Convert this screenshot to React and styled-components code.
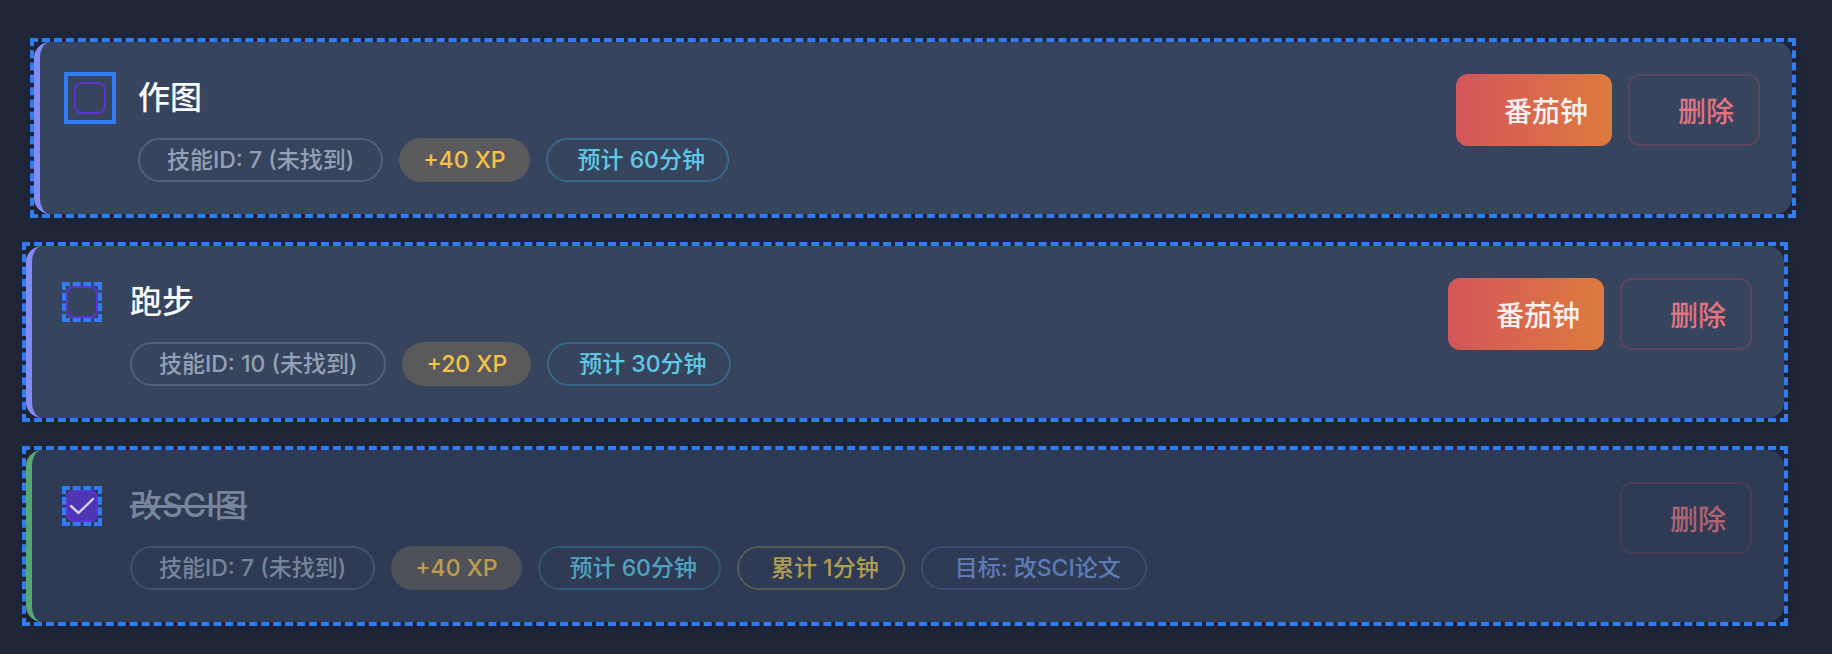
import React from 'react'
import styled, { createGlobalStyle } from 'styled-components'

const GlobalStyle = createGlobalStyle`
  body {
    margin: 0;
    background: #1f2638;
    font-family: Inter, "Noto Sans CJK SC", sans-serif;
  }
`

const List = styled.div`
  display: flex;
  flex-direction: column;
  gap: 32px;
  padding: 42px 48px 32px 26px;
`

// square dashed frame around each card (the card itself is rounded)
const Frame = styled.div`
  outline: 4px dashed #307cf4;
  outline-offset: 0;
  transform: ${p => (p.$hover ? 'translateX(8px)' : 'none')};
`

const Card = styled.div`
  display: flex;
  justify-content: space-between;
  align-items: flex-start;
  box-sizing: border-box;
  height: 172px;
  padding: 32px 32px 32px 34px;
  background: ${p => (p.$done ? '#2f3b54' : '#37445e')};
  border-left: 6px solid ${p => (p.$done ? '#56a677' : '#818cf8')};
  border-radius: 16px;
  box-shadow: 0 4px 12px rgba(0, 0, 0, 0.18);
`

const Main = styled.div`
  display: flex;
  flex-direction: column;
  gap: 16px;
`

const TitleRow = styled.div`
  display: flex;
  align-items: center;
  gap: 32px;
  height: 48px;
`

const CheckFrame = styled.span`
  display: flex;
  outline: ${p => (p.$focus ? '4px solid #307cf4' : '4px dashed #307cf4')};
  outline-offset: ${p => (p.$focus ? '6px' : '0')};
`

const Check = styled.span`
  display: flex;
  align-items: center;
  justify-content: center;
  box-sizing: border-box;
  width: 32px;
  height: 32px;
  border: 2px solid #5a33d2;
  border-radius: 8px;
  background: ${p => (p.$checked ? '#4f35b4' : 'transparent')};
`

const Title = styled.span`
  font-size: 32px;
  font-weight: 500;
  line-height: 48px;
  color: ${p => (p.$done ? '#94a3b8' : '#f8fafc')};
  text-decoration: ${p => (p.$done ? 'line-through' : 'none')};
  opacity: ${p => (p.$done ? 0.72 : 1)};
`

const Tags = styled.div`
  display: flex;
  gap: 16px;
  padding-left: 64px;
  opacity: ${p => (p.$done ? 0.72 : 1)};
`

const tagTones = {
  skill: { border: 'rgba(148, 163, 184, 0.3)', color: '#94a0b4', bg: 'transparent', pad: '0 27px' },
  xp: { border: 'transparent', color: '#f4c24a', bg: '#5a5a5c', pad: '0 22px' },
  time: { border: 'rgba(56, 189, 248, 0.3)', color: '#5fc9e5', bg: 'transparent', pad: '0 22px 0 30px' },
  total: { border: 'rgba(234, 200, 90, 0.3)', color: '#e2c355', bg: 'transparent', pad: '0 24px 0 32px' },
  goal: { border: 'rgba(96, 140, 230, 0.3)', color: '#6f96de', bg: 'transparent', pad: '0 24px 0 32px' },
}

const Tag = styled.span`
  box-sizing: border-box;
  height: 44px;
  padding: ${p => tagTones[p.$tone].pad};
  border: 2px solid ${p => tagTones[p.$tone].border};
  border-radius: 999px;
  background: ${p => tagTones[p.$tone].bg};
  color: ${p => tagTones[p.$tone].color};
  font-size: 23px;
  font-weight: 500;
  line-height: 40px;
  white-space: nowrap;
`

const Actions = styled.div`
  display: flex;
  gap: 16px;
  opacity: ${p => (p.$done ? 0.72 : 1)};
`

const Button = styled.button`
  box-sizing: border-box;
  height: 72px;
  padding: 0 24px 0 48px;
  border-radius: 12px;
  font-family: inherit;
  font-size: 28px;
  font-weight: 500;
  cursor: pointer;
`

const PomodoroButton = styled(Button)`
  border: none;
  background: linear-gradient(90deg, #d4555a, #dd7b3e);
  color: #f8f1f0;
`

const DeleteButton = styled(Button)`
  border: 2px solid rgba(239, 68, 88, 0.2);
  background: transparent;
  color: #e3737f;
`

const CheckMark = () => (
  <svg width="26" height="20" viewBox="0 0 26 20" fill="none">
    <path d="M2 10 L9.5 17 L24 3" stroke="#d6d2e8" strokeWidth="2.4" strokeLinecap="round" strokeLinejoin="round" />
  </svg>
)

const tasks = [
  {
    id: 1,
    title: '作图',
    hover: true,
    tags: [
      { tone: 'skill', text: '技能ID: 7 (未找到)' },
      { tone: 'xp', text: '+40 XP' },
      { tone: 'time', text: '预计 60分钟' },
    ],
  },
  {
    id: 2,
    title: '跑步',
    tags: [
      { tone: 'skill', text: '技能ID: 10 (未找到)' },
      { tone: 'xp', text: '+20 XP' },
      { tone: 'time', text: '预计 30分钟' },
    ],
  },
  {
    id: 3,
    title: '改SCI图',
    done: true,
    tags: [
      { tone: 'skill', text: '技能ID: 7 (未找到)' },
      { tone: 'xp', text: '+40 XP' },
      { tone: 'time', text: '预计 60分钟' },
      { tone: 'total', text: '累计 1分钟' },
      { tone: 'goal', text: '目标: 改SCI论文' },
    ],
  },
]

const App = () => {
  return (
    <>
      <GlobalStyle />
      <List>
        {tasks.map(task => (
          <Frame key={task.id} $hover={task.hover}>
            <Card $done={task.done}>
              <Main>
                <TitleRow>
                  <CheckFrame $focus={task.hover}>
                    <Check $checked={task.done}>
                      {task.done && <CheckMark />}
                    </Check>
                  </CheckFrame>
                  <Title $done={task.done}>{task.title}</Title>
                </TitleRow>
                <Tags $done={task.done}>
                  {task.tags.map((tag, i) => (
                    <Tag key={i} $tone={tag.tone}>{tag.text}</Tag>
                  ))}
                </Tags>
              </Main>
              <Actions $done={task.done}>
                {!task.done && <PomodoroButton>番茄钟</PomodoroButton>}
                <DeleteButton>删除</DeleteButton>
              </Actions>
            </Card>
          </Frame>
        ))}
      </List>
    </>
  )
}

export default App
